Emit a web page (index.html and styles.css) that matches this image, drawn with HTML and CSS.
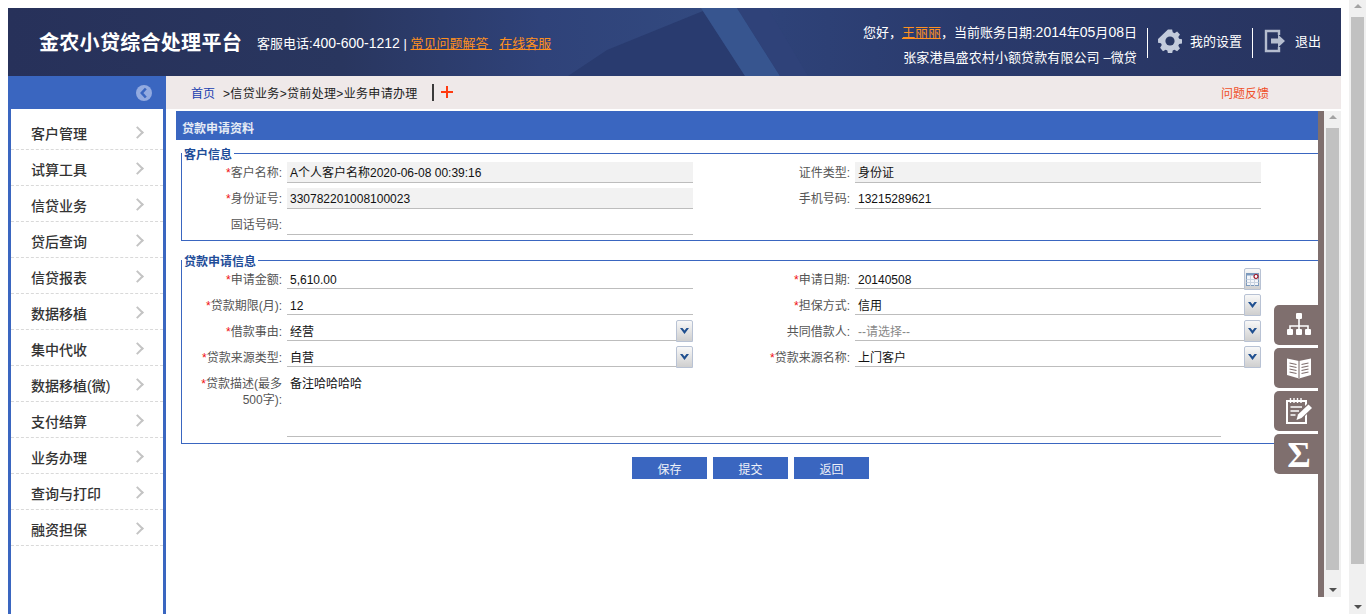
FILE: index.html
```html
<!DOCTYPE html>
<html lang="zh-CN">
  <head>
    <meta charset="UTF-8" />
    <title>金农小贷综合处理平台</title>
    <link rel="stylesheet" href="styles.css">
  </head>
  <body>
    <div class="app">
      <!-- top banner -->
      <header class="banner">
        <svg class="banner-art" viewBox="0 0 1333 68" preserveAspectRatio="none">
          <polygon points="695,3 599,42 560,68 737,68" fill="#293b6f" />
          <polygon points="693,0 729,0 772,68 737,68" fill="#37558f" />
          <polygon points="729,0 760,0 800,68 772,68" fill="#2f4279" />
        </svg>
        <div class="brand">
          <span class="brand-name">金农小贷综合处理平台</span>
          <span class="hotline">客服电话:<span class="num">400-600-1212</span> | <a class="link-o">常见问题解答&nbsp;</a>&nbsp;&nbsp;<a class="link-o">在线客服</a></span>
        </div>
        <div class="account">
          <div class="account-info">
            <div>您好，<a class="link-o">王丽丽</a>，当前账务日期:<span class="num">2014</span>年<span class="num">05</span>月<span class="num">08</span>日</div>
            <div class="org">张家港昌盛农村小额贷款有限公司 –微贷</div>
          </div>
          <div class="banner-btn first">
            <svg width="24" height="24" viewBox="0 0 24 24">
              <path fill="#c3cbdb" fill-rule="evenodd" d="M9.6 0h4.8l.7 3.4 2 .9 3-1.9 3.3 3.4-1.9 2.9.9 2.1 3.4.6v4.8l-3.4.7-.9 2 1.9 3-3.3 3.3-3-1.9-2 .9-.7 3.4H9.6l-.7-3.4-2-.9-3 1.9L.6 21l1.9-3-.9-2-3.4-.7V11z" transform="translate(1.6 .4) scale(.87)" />
              <circle cx="12" cy="12" r="4.6" fill="#2a3863" />
            </svg>
            <span>我的设置</span>
          </div>
          <div class="banner-btn">
            <svg width="22" height="24" viewBox="0 0 22 24">
              <path fill="none" stroke="#b5bdcf" stroke-width="2.4" d="M15 6V2H2v20h13v-4" />
              <path fill="#b5bdcf" d="M7 9.500h7V5.500l7 6.500-7 6.500v-4H7z" />
            </svg>
            <span>退出</span>
          </div>
        </div>
      </header>

      <div class="main">
        <!-- left menu -->
        <aside class="sidebar">
          <div class="sidebar-head">
            <svg width="16" height="16" viewBox="0 0 16 16">
              <circle cx="8" cy="8" r="8" fill="#92aae0" />
              <path fill="none" stroke="#3a66c0" stroke-width="2.6" d="M9.800 3.500 5.800 8l4 4.500" />
            </svg>
          </div>
          <ul class="menu">
            <li>客户管理</li>
            <li>试算工具</li>
            <li>信贷业务</li>
            <li>贷后查询</li>
            <li>信贷报表</li>
            <li>数据移植</li>
            <li>集中代收</li>
            <li>数据移植(微)</li>
            <li>支付结算</li>
            <li>业务办理</li>
            <li>查询与打印</li>
            <li>融资担保</li>
          </ul>
        </aside>

        <div class="content">
          <!-- breadcrumb -->
          <div class="crumbs">
            <a class="crumb-home">首页</a>
            <span class="crumb-path">&gt;信贷业务&gt;贷前处理&gt;业务申请办理</span>
            <span class="crumb-sep"></span>
            <svg class="crumb-add" width="12" height="12" viewBox="0 0 12 12"><path fill="#ff3a10" d="M5 0h2v5h5v2H7v5H5V7H0V5h5z" /></svg>
            <a class="feedback">问题反馈</a>
          </div>

          <div class="work">
            <div class="pane">
              <div class="pane-title">贷款申请资料</div>

              <!-- customer info -->
              <fieldset class="group">
                <legend>客户信息</legend>
                <div class="form-grid">
                  <label><i>*</i>客户名称:</label>
                  <div class="field off">A个人客户名称2020-06-08 00:39:16</div>
                  <label>证件类型:</label>
                  <div class="field off">身份证</div>
                  <label><i>*</i>身份证号:</label>
                  <div class="field off">330782201008100023</div>
                  <label>手机号码:</label>
                  <div class="field">13215289621</div>
                  <label>固话号码:</label>
                  <div class="field"></div>
                </div>
              </fieldset>

              <!-- loan info -->
              <fieldset class="group group-loan">
                <legend>贷款申请信息</legend>
                <div class="form-grid">
                  <label><i>*</i>申请金额:</label>
                  <div class="field">5,610.00</div>
                  <label><i>*</i>申请日期:</label>
                  <div class="field"><span class="val">20140508</span>
                    <span class="pick">
                      <svg width="13" height="13" viewBox="0 0 13 13">
                        <rect x=".5" y=".5" width="12" height="12" fill="#f4f6fa" stroke="#7d9abd" />
                        <rect x=".5" y=".5" width="12" height="2" fill="#7d9abd" />
                        <path stroke="#c9d3e0" d="M.5 6.500h12M.5 9.500h12M4.500 3v10M8.500 3v10" />
                        <circle cx="10" cy="3.500" r="2" fill="#fff" stroke="#a01020" stroke-width="1.200" />
                      </svg>
                    </span>
                  </div>
                  <label><i>*</i>贷款期限(月):</label>
                  <div class="field">12</div>
                  <label><i>*</i>担保方式:</label>
                  <div class="field"><span class="val">信用</span><span class="pick"><svg class="arrow" width="9" height="6" viewBox="0 0 9 6"><path fill="#1f4f8f" d="M0 0h2.500l2 2.500 2-2.500H9L4.500 6z" /></svg></span></div>
                  <label><i>*</i>借款事由:</label>
                  <div class="field"><span class="val">经营</span><span class="pick"><svg class="arrow" width="9" height="6" viewBox="0 0 9 6"><path fill="#1f4f8f" d="M0 0h2.500l2 2.500 2-2.500H9L4.500 6z" /></svg></span></div>
                  <label>共同借款人:</label>
                  <div class="field"><span class="val hint">--请选择--</span><span class="pick"><svg class="arrow" width="9" height="6" viewBox="0 0 9 6"><path fill="#1f4f8f" d="M0 0h2.500l2 2.500 2-2.500H9L4.500 6z" /></svg></span></div>
                  <label><i>*</i>贷款来源类型:</label>
                  <div class="field"><span class="val">自营</span><span class="pick"><svg class="arrow" width="9" height="6" viewBox="0 0 9 6"><path fill="#1f4f8f" d="M0 0h2.500l2 2.500 2-2.500H9L4.500 6z" /></svg></span></div>
                  <label><i>*</i>贷款来源名称:</label>
                  <div class="field"><span class="val">上门客户</span><span class="pick"><svg class="arrow" width="9" height="6" viewBox="0 0 9 6"><path fill="#1f4f8f" d="M0 0h2.500l2 2.500 2-2.500H9L4.500 6z" /></svg></span></div>
                  <label class="label-wrap"><i>*</i>贷款描述(最多500字):</label>
                  <div class="field area">备注哈哈哈哈</div>
                </div>
              </fieldset>

              <div class="actions">
                <button type="button">保存</button>
                <button type="button">提交</button>
                <button type="button">返回</button>
              </div>
            </div>

            <!-- floating tools sit over the pane edge -->
            <div class="tools">
              <div class="tool">
                <svg width="26" height="24" viewBox="0 0 26 24">
                  <path fill="none" stroke="#fff" stroke-width="1.600" d="M13 6v11M4 17v-4h18v4" />
                  <rect x="10" y="0" width="6" height="6" rx="1" fill="#fff" />
                  <rect x="1" y="16" width="6" height="6" rx="1" fill="#fff" />
                  <rect x="10" y="16" width="6" height="6" rx="1" fill="#fff" />
                  <rect x="19" y="16" width="6" height="6" rx="1" fill="#fff" />
                </svg>
              </div>
              <div class="tool">
                <svg width="24" height="22" viewBox="0 0 24 22">
                  <path fill="#fff" d="M0 1.500 12 4l12-2.500V18l-12 3.500L0 18z" />
                  <path fill="none" stroke="#7f6f6e" stroke-width="1.100" d="M12 4v17M2.500 6l7 1.500M2.500 9l7 1.500M2.500 12l7 1.500M2.500 15l7 1.500M21.500 6l-7 1.500M21.500 9l-7 1.500M21.500 12l-7 1.500M21.500 15l-7 1.500" />
                </svg>
              </div>
              <div class="tool">
                <svg width="27" height="26" viewBox="0 0 27 26">
                  <rect x="1" y="3" width="19" height="22" fill="none" stroke="#fff" stroke-width="2" />
                  <path stroke="#fff" stroke-width="1.400" d="M4.500 0v5M8 0v5M11.500 0v5M15 0v5M4.500 9H16M4.500 13H13M4.500 17h5" />
                  <path fill="#7f6f6e" d="M9 23l2-7L22 5l5 5-11 11z" />
                  <path fill="#fff" d="M10.500 22l1.500-5.500L22.500 6.500l3.500 3.500L15.500 20z" />
                </svg>
              </div>
              <div class="tool tool-sum">Σ</div>
            </div>

            <div class="edge"></div>
            <div class="scrollbar inner">
              <span class="up"></span>
              <span class="thumb"></span>
              <span class="down"></span>
            </div>
          </div>
        </div>
      </div>
    </div>

    <div class="scrollbar outer">
      <span class="up"></span>
      <span class="thumb"></span>
      <span class="down"></span>
    </div>
  </body>
</html>
```

FILE: styles.css
```css
/* Basic styling */
* {
  margin: 0;
  padding: 0;
  box-sizing: border-box;
}
html,
body {
  height: 614px;
  overflow: hidden;
}
body {
  display: flex;
  justify-content: space-between;
  background-color: #fff;
  color: #222;
  font-family: "Liberation Sans", "Noto Sans CJK SC", sans-serif;
  font-size: 12px;
}
.app {
  display: flex;
  flex-direction: column;
  width: 1333px;
  height: 606px;
  margin: 8px 0 0 8px;
}

/* banner */
.banner {
  position: relative;
  display: flex;
  justify-content: space-between;
  flex: 0 0 68px;
  padding: 0 20px 0 31px;
  overflow: hidden;
  background: linear-gradient(90deg, #27315a 0%, #29365f 25%, #2f4279 40%, #32497f 52%, #2e4278 58%, #2a3a6c 72%, #28345f 100%);
  color: #fff;
}
.banner-art {
  position: absolute;
  inset: 0;
  width: 100%;
  height: 100%;
}
.brand,
.account {
  position: relative;
  display: flex;
  align-items: center;
}
.brand-name {
  margin-bottom: 1px;
  font-size: 20px;
  font-weight: bold;
  letter-spacing: .3px;
}
.hotline {
  margin-left: 15px;
  font-size: 13px;
}
.num {
  font-size: 14px;
}
.link-o {
  color: #ff9020;
  text-decoration: underline;
}
.account-info {
  padding-top: 5px;
  font-size: 13px;
  line-height: 25px;
  text-align: right;
}
.org {
  letter-spacing: .1px;
}
.banner-btn {
  display: flex;
  align-items: center;
  gap: 9px;
  height: 30px;
  margin: 2px 0 0 10px;
  padding-left: 11px;
  border-left: 1px solid #fff;
  font-size: 13px;
}
.banner-btn.first {
  gap: 8px;
  padding-left: 10px;
}
.banner-btn svg {
  margin-bottom: 4px;
}
.banner-btn span {
  margin-bottom: 6px;
}

.main {
  display: flex;
  flex: 1;
  min-height: 0;
}

/* left menu */
.sidebar {
  flex: 0 0 158px;
  border: solid #3a66c0;
  border-width: 0 3px;
}
.sidebar-head {
  display: flex;
  justify-content: flex-end;
  align-items: center;
  height: 33px;
  margin: 0 -3px;
  padding-right: 14px;
  background-color: #3a66c0;
}
.menu {
  margin-top: 5px;
  list-style: none;
}
.menu li {
  display: flex;
  align-items: center;
  justify-content: space-between;
  height: 36px;
  padding: 2px 21px 0 20px;
  border-bottom: 1px dashed #d9d9d9;
  color: #333;
  font-size: 14px;
  font-weight: 500;
}
.menu li::after {
  content: "";
  width: 7px;
  height: 7px;
  border: solid #c4c4c4;
  border-width: 2px 2px 0 0;
  transform: rotate(45deg);
}

/* breadcrumb */
.content {
  display: flex;
  flex-direction: column;
  flex: 1;
  min-width: 0;
}
.crumbs {
  display: flex;
  align-items: center;
  flex: 0 0 33px;
  padding: 0 0 1px 25px;
  background-color: #efe9e9;
}
.crumb-home {
  color: #1a3fb0;
}
.crumb-path {
  margin-left: 8px;
  letter-spacing: .33px;
}
.crumb-sep {
  width: 2px;
  height: 17px;
  margin: 0 2px 0 14px;
  background-color: #3a3a3a;
}
.crumb-add {
  margin-left: 5px;
}
.feedback {
  margin-left: auto;
  margin-right: 72px;
  color: #f0502a;
}

/* form area */
.work {
  position: relative;
  display: flex;
  height: 486px;
  margin-top: 2px;
  padding-left: 10px;
}
.pane {
  flex: 1;
  min-width: 0;
  overflow: hidden;
}
.pane-title {
  height: 29px;
  padding-left: 6px;
  background-color: #3a66c0;
  color: #e6ebf5;
  font-weight: bold;
  line-height: 37px;
}
.group {
  margin: 4px -10px 0 5px;
  padding-bottom: 5px;
  border: 1px solid #3a66c0;
}
.group-loan {
  margin-top: 10px;
  padding-bottom: 6px;
}
.group legend {
  padding: 4px 2px 0;
  color: #1f4d99;
  font-weight: bold;
  line-height: 14px;
}
.form-grid {
  display: grid;
  grid-template-columns: 105px 406px 162px 406px;
  row-gap: 5px;
}
.group-loan .form-grid {
  margin-top: -1px;
}
.form-grid label {
  height: 21px;
  padding-right: 5px;
  color: #555;
  line-height: 22px;
  text-align: right;
}
.group-loan .form-grid label {
  line-height: 24px;
}
.form-grid label i {
  display: inline-block;
  width: 6px;
  color: #f01010;
  font-style: normal;
}
.group-loan .form-grid .label-wrap {
  grid-column: 1;
  height: auto;
  padding: 4px 5px 0 10px;
  line-height: 16px;
}
.field {
  display: flex;
  height: 21px;
  padding-left: 3px;
  border-bottom: 1px solid #bdbdbd;
  color: #111;
  line-height: 22px;
}
.group-loan .field {
  line-height: 24px;
}
.field.off {
  background-color: #f2f2f2;
}
.field.area {
  grid-column: 2 / 5;
  width: 934px;
  height: 65px;
}
.val {
  flex: 1;
}
.hint {
  color: #888;
}
.pick {
  display: flex;
  align-items: center;
  justify-content: center;
  flex: 0 0 17px;
  height: 22px;
  border: 1px solid #b8c2d4;
  border-radius: 2px 2px 0 0;
  background: linear-gradient(#f8f8f8, #cfcfcf);
}
.actions {
  display: flex;
  justify-content: center;
  gap: 6px;
  margin: 13px 0 0 7px;
}
.actions button {
  width: 75px;
  height: 22px;
  border: none;
  background-color: #3a66c0;
  color: #eef1f8;
  font: inherit;
}

/* floating tools */
.tools {
  position: absolute;
  top: 194px;
  right: 23px;
  display: flex;
  flex-direction: column;
  gap: 3px;
}
.tool {
  display: flex;
  align-items: center;
  justify-content: center;
  width: 44px;
  height: 40px;
  padding-left: 6px;
  border-radius: 5px 0 0 5px;
  background-color: #7f6f6e;
}
.tool-sum {
  padding-top: 2px;
  color: #fff;
  font-family: "Liberation Serif", serif;
  font-size: 36px;
  font-weight: bold;
  line-height: 38px;
}
.edge {
  flex: 0 0 6px;
  background-color: #7f6f6e;
}

/* fake scrollbars */
.scrollbar {
  position: relative;
  display: block;
  flex: 0 0 17px;
  width: 17px;
  background-color: #f0f0f0;
}
.thumb {
  position: absolute;
  left: 2px;
  width: 13px;
  background-color: #c1c1c1;
}
.up,
.down {
  position: absolute;
  left: 5px;
  width: 0;
  height: 0;
  border: solid transparent;
  border-width: 4px 4px;
}
.up {
  top: 4px;
  border-top-width: 0;
  border-bottom-color: #a3a3a3;
}
.down {
  bottom: 5px;
  border-bottom-width: 0;
  border-top-color: #505050;
}
.inner .thumb {
  top: 17px;
  height: 442px;
}
.outer {
  height: 614px;
}
.outer .thumb {
  top: 17px;
  height: 547px;
}
```
